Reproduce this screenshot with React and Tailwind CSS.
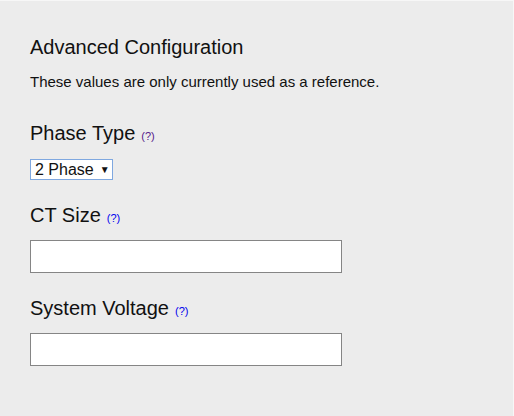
export default function App() {
  const help = (visited) => (
    <a
      href="#"
      className={`ml-[6px] text-[11px] no-underline ${visited ? "text-[#551a8b]" : "text-[#0000ee]"}`}
    >
      (?)
    </a>
  );

  return (
    <div
      className="w-[514px] h-[416px] bg-[#ececec] border-t border-r border-[#f7f7f7] text-[#111]"
      style={{ fontFamily: '"Liberation Sans", Arial, sans-serif' }}
    >
      <div className="pl-[30px] pt-[34px]">
        <h2 className="text-[20px] leading-[24px]">Advanced Configuration</h2>
        <p className="mt-[14px] text-[15px] leading-[18px]">
          These values are only currently used as a reference.
        </p>

        <h3 className="mt-[30px] text-[20px] leading-[24px] flex items-baseline">
          Phase Type{help(true)}
        </h3>
        <div className="mt-[11px] inline-flex items-center h-[21px] w-[83px] bg-white border border-[#7fa8e0] pl-[4px] text-[16px] leading-none">
          <span>2 Phase</span>
          <span className="ml-[6px] text-[10px]">▼</span>
        </div>

        <h3 className="mt-[21px] text-[20px] leading-[24px] flex items-baseline">
          CT Size{help(false)}
        </h3>
        <div className="mt-[10px] h-[33px] w-[312px] bg-white border border-[#858585]" />

        <h3 className="mt-[23px] text-[20px] leading-[24px] flex items-baseline">
          System Voltage{help(false)}
        </h3>
        <div className="mt-[10px] h-[33px] w-[312px] bg-white border border-[#858585]" />
      </div>
    </div>
  );
}
